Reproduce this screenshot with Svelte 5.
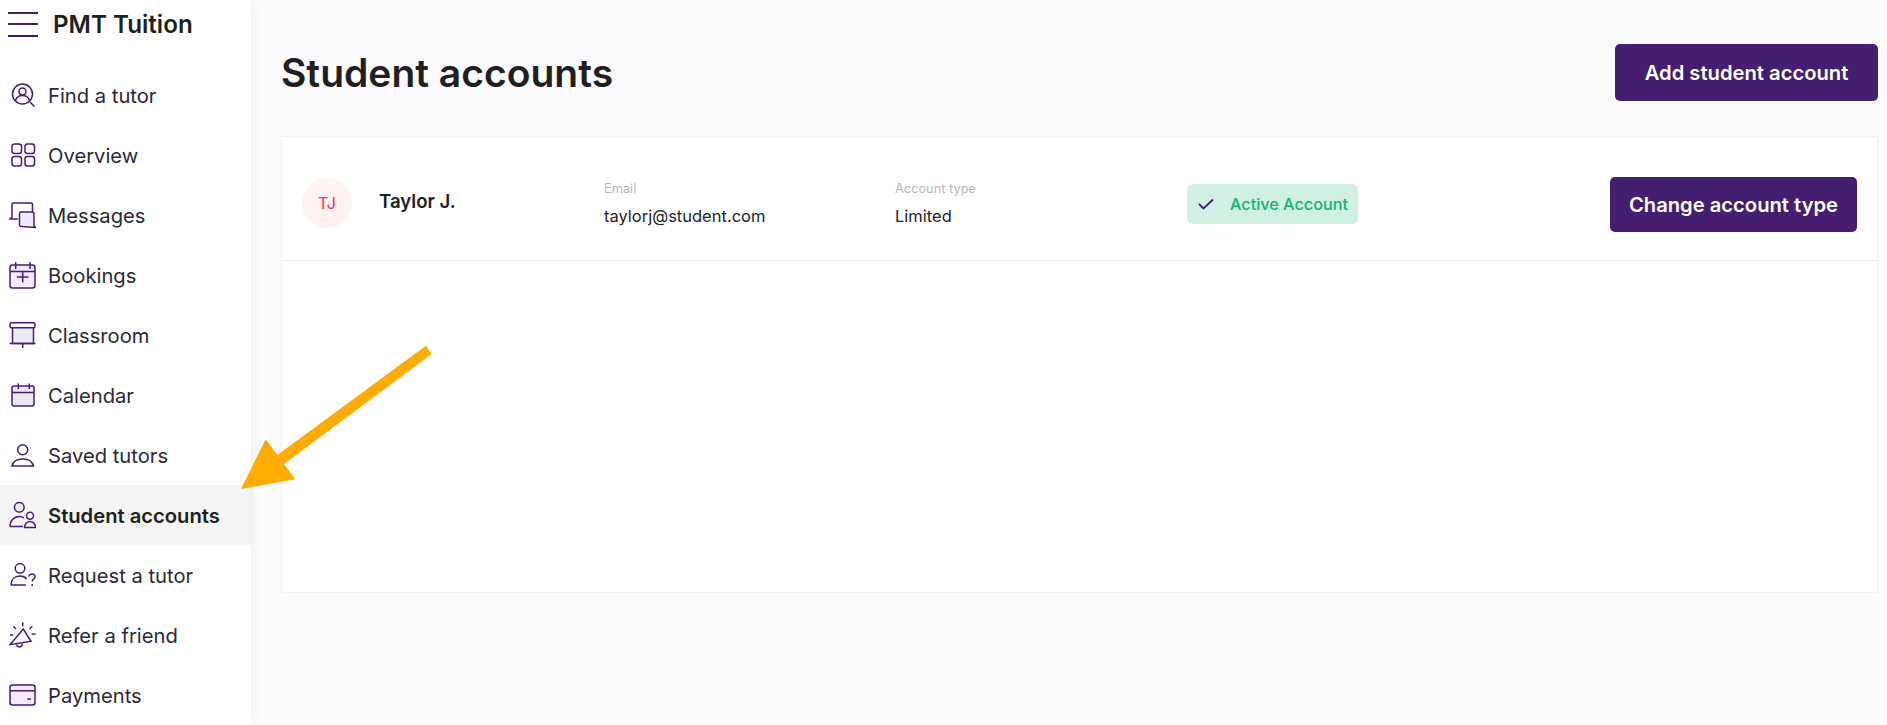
<script>
  const nav = [
    { label: "Find a tutor", icon: '<circle cx="13.5" cy="12" r="10"/><circle cx="13.5" cy="9.5" r="3.5"/><path d="M6.5 18.5c1-3.5 4-5 7-5s6 1.500 7 5"/><path d="M21 20l4.500 4.500"/>' },
    { label: "Overview", icon: '<rect x="3" y="2" width="9.500" height="9.500" rx="2.500"/><rect x="16" y="2" width="9.500" height="9.500" rx="2.500"/><rect x="3" y="14.500" width="9.500" height="9.500" rx="2.500"/><rect x="16" y="14.500" width="9.500" height="9.500" rx="2.500"/>' },
    { label: "Messages", icon: '<path d="M9 17H1l2-2V2.500Q3 1 4.500 1h17.500Q23.500 1 23.500 2.500V10"/><path fill="#f0eafa" d="M11.500 10h11.500q2 0 2 2v11.500l1.500 2-14-1q-2 0-2-2v-10.500q0-2 1-2z"/>' },
    { label: "Bookings", icon: '<rect fill="#f0eafa" x="1" y="3" width="25" height="23" rx="2.500"/><path d="M1 9.500h25M6.700 0v7M21 0v7M13.700 9.500v11M8 15h11.500"/>' },
    { label: "Classroom", icon: '<rect fill="#ebe8f2" x="3.500" y="5" width="21" height="16.500"/><rect fill="#fff" x="1" y="0.800" width="25" height="5" rx="1.500"/><path d="M0.500 21.500h26M13.700 21.500v4.500"/>' },
    { label: "Calendar", icon: '<rect fill="#ebe8f2" x="3" y="4" width="22" height="20" rx="2"/><path d="M3 10.500h22M9.300 1.500v5.500M20.300 1.500v5.500"/>' },
    { label: "Saved tutors", icon: '<circle cx="13.700" cy="7.700" r="5"/><path d="M3 24c1-4.500 5-7 10.700-7s9.700 2.500 10.700 7z"/>' },
    { label: "Student accounts", icon: '<circle cx="10.300" cy="5.300" r="4.800"/><path d="M1 24.500c0-6 4-10 9.500-10 2 0 3.500.5 4.500 1.500M1 24.500h13"/><circle cx="21" cy="13.700" r="3.500"/><path d="M15.500 25.500c0-3.500 2.500-6 5.500-6s5.500 2.500 5.500 6z"/>' },
    { label: "Request a tutor", icon: '<circle cx="11" cy="6.300" r="4.800"/><path d="M2 23c0-5.500 3.500-9 9-9 3 0 5 1 6.500 3M2 23h15"/><path d="M20 14.500c.5-3.500 6.500-3.500 6 .5-.3 2-2.800 2-2.800 4.500M23.200 22v2.300"/>' },
    { label: "Refer a friend", icon: '<path d="M1 22.700L14.300 7 22 19.300z"/><path d="M7.500 22.500a3 3 0 0 0 5.500 1v-2M13.700.3v4M4.300 4.300L7 7M23.300 4.300L20.300 7M1 13h3.300M22.700 12h4"/>' },
    { label: "Payments", icon: '<rect fill="#f0eafa" x="1" y="3" width="25" height="20" rx="2.500"/><path d="M1 8.700h25M18.300 17H22"/>' }
  ];
  const active = "Student accounts";
</script>

<div class="page">
  <!-- Sidebar -->
  <aside class="sidebar">
    <div class="brand">
      <div class="burger"><span></span><span></span><span></span></div>
      <strong>PMT Tuition</strong>
    </div>
    <nav>
      {#each nav as item}
        <div class="nav-item" class:active={item.label === active}>
          <svg viewBox="0 0 27 27" width="27" height="27" fill="none" stroke="#451d71" stroke-width="1.5">
            {@html item.icon}
          </svg>
          <span>{item.label}</span>
        </div>
      {/each}
    </nav>
  </aside>

  <!-- Main content -->
  <main>
    <header>
      <h1>Student accounts</h1>
      <button class="add">Add student account</button>
    </header>

    <section class="card">
      <div class="row">
        <div class="person">
          <div class="avatar">TJ</div>
          <div class="name">Taylor J.</div>
        </div>
        <div class="field">
          <div class="label">Email</div>
          <div class="value">taylorj@student.com</div>
        </div>
        <div class="field">
          <div class="label">Account type</div>
          <div class="value">Limited</div>
        </div>
        <div class="badge-cell">
          <div class="badge">
            <svg viewBox="0 0 16 12" width="16" height="12" fill="none" stroke="#451d71" stroke-width="1.800">
              <path d="M1 6l4.500 4.500L15 1.500" />
            </svg>
            <span>Active Account</span>
          </div>
        </div>
        <button class="change">Change account type</button>
      </div>
    </section>
  </main>

  <!-- Annotation arrow over the page -->
  <svg class="arrow" viewBox="0 0 200 150" width="200" height="150">
    <path fill="#ffab00" d="M1 149L25.700 99.300 37.300 115 186 5.700 191.700 14 44 124 55.300 139.300z" />
  </svg>
</div>

<style>
  :global(body) {
    margin: 0;
    background: #fafafd;
    font-family: Inter, "Liberation Sans", sans-serif;
    color: #221f1f;
  }

  .page {
    display: flex;
    height: 725px;
    overflow: hidden;
    position: relative;
  }

  .sidebar {
    width: 251px;
    flex: none;
    background: #fff;
    box-shadow: 0 0 12px rgba(0, 0, 0, 0.06);
    z-index: 1;
  }

  .brand {
    height: 65px;
    padding: 0 0 17px 8px;
    box-sizing: border-box;
    display: flex;
    align-items: center;
    gap: 15px;
  }

  .brand strong {
    font-size: 24.2px;
    font-weight: 600;
  }

  .burger {
    width: 30px;
    display: flex;
    flex-direction: column;
    gap: 9.5px;
  }

  .burger span {
    height: 2px;
    background: #451d71;
  }

  .nav-item {
    height: 60px;
    display: flex;
    align-items: center;
    gap: 12px;
    padding-left: 9px;
    font-size: 20.2px;
    color: #2b2a35;
  }

  .nav-item.active {
    background: #f4f4f5;
    font-weight: 600;
    color: #221f1f;
  }

  main {
    flex: 1;
    padding: 44px 9px 0 30px;
  }

  header {
    display: flex;
    justify-content: space-between;
    align-items: center;
    margin-bottom: 35px;
  }

  h1 {
    margin: 0;
    font-size: 39px;
    font-weight: 600;
  }

  button {
    background: #451d71;
    color: #fff;
    border: 0;
    border-radius: 5px;
    font-family: inherit;
    font-size: 20.2px;
    font-weight: 600;
    padding: 0;
  }

  .add {
    width: 263px;
    height: 57px;
  }

  .change {
    width: 247px;
    height: 55px;
    margin: 4px 0 0 auto;
  }

  .card {
    height: 457px;
    box-sizing: border-box;
    background: #fff;
    border: 1px solid #f1f1f4;
  }

  .row {
    height: 124px;
    box-sizing: border-box;
    border-bottom: 1px solid #ebebee;
    display: grid;
    grid-template-columns: 302px 291px 292px 1fr 247px;
    align-items: center;
    padding: 8px 20px 0;
  }

  .person {
    display: flex;
    align-items: center;
    gap: 27px;
  }

  .avatar {
    width: 50px;
    height: 50px;
    border-radius: 50%;
    background: #fff3f1;
    color: #ff2d55;
    font-size: 16px;
    display: flex;
    align-items: center;
    justify-content: center;
  }

  .name {
    font-size: 18.6px;
    font-weight: 600;
    margin-bottom: 3px;
  }

  .field {
    margin-top: 2px;
  }

  .label {
    font-size: 12.8px;
    color: #b7b5bb;
    margin-bottom: 10px;
  }

  .value {
    font-size: 16.5px;
  }

  .badge-cell {
    margin-top: 3px;
  }

  .badge {
    width: 171px;
    height: 40px;
    box-sizing: border-box;
    padding-left: 11px;
    background: #cff0e2;
    border-radius: 6px;
    display: flex;
    align-items: center;
    gap: 16px;
    color: #10b474;
    font-size: 16.2px;
    font-weight: 500;
  }

  .arrow {
    position: absolute;
    left: 240px;
    top: 340px;
    z-index: 2;
  }
</style>
